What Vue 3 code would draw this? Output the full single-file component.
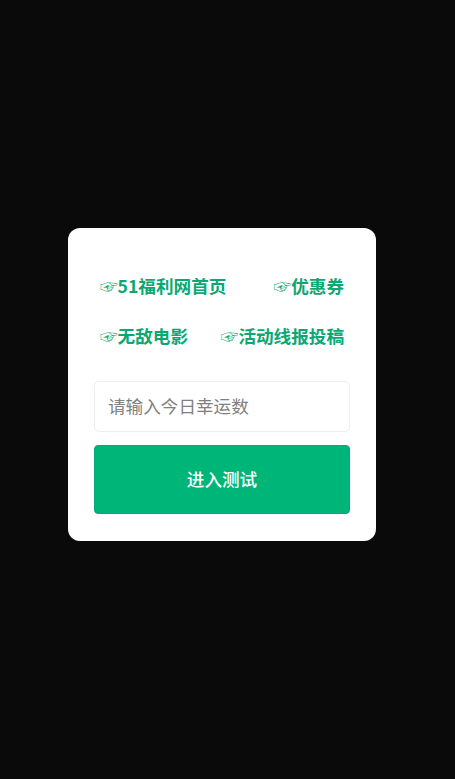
<script setup>
import { ref } from 'vue';

const lucky = ref('');

const rows = [
	['☞51福利网首页', '☞优惠券'],
	['☞无敌电影', '☞活动线报投稿'],
];
</script>

<template>
	<div class="page">
		<div class="card">
			<div class="links">
				<div v-for="(row, i) in rows" :key="i" class="links__row">
					<a v-for="label in row" :key="label" class="links__item" href="#">{{ label }}</a>
				</div>
			</div>
			<input v-model="lucky" class="lucky" type="text" placeholder="请输入今日幸运数" />
			<button class="enter" type="button">进入测试</button>
		</div>
	</div>
</template>

<style scoped>
.page {
	min-height: 779px;
	box-sizing: border-box;
	padding: 0 11px 10px 0;
	display: flex;
	justify-content: center;
	align-items: center;
	background-color: #0a0a0a;
	font-family: "Noto Sans CJK SC", "DejaVu Sans", sans-serif;
}

.card {
	width: 308px;
	box-sizing: border-box;
	padding: 33px 26px 27px;
	border-radius: 12px;
	background-color: #fff;
}

.links {
	padding: 0 6px;
	margin-bottom: 20px;
}

.links__row {
	height: 50px;
	box-sizing: border-box;
	padding-bottom: 2px;
	display: flex;
	justify-content: space-between;
	align-items: center;
}

.links__item {
	font-size: 17.6px;
	font-weight: 700;
	color: #0aa872;
	text-decoration: none;
}

.lucky {
	display: block;
	width: 100%;
	height: 51px;
	box-sizing: border-box;
	padding: 0 13px 2px;
	margin-bottom: 13px;
	border: 1px solid #eeeeee;
	border-radius: 5px;
	outline: none;
	font-family: inherit;
	font-size: 17.6px;
	color: #333;
}

.lucky::placeholder {
	color: #808080;
}

.enter {
	display: block;
	width: 100%;
	height: 69px;
	padding: 0 0 2px;
	border: 1px solid #07a97b;
	border-radius: 4px;
	background-color: #00b578;
	color: #fff;
	font-family: inherit;
	font-size: 17.6px;
	font-weight: 500;
}
</style>
